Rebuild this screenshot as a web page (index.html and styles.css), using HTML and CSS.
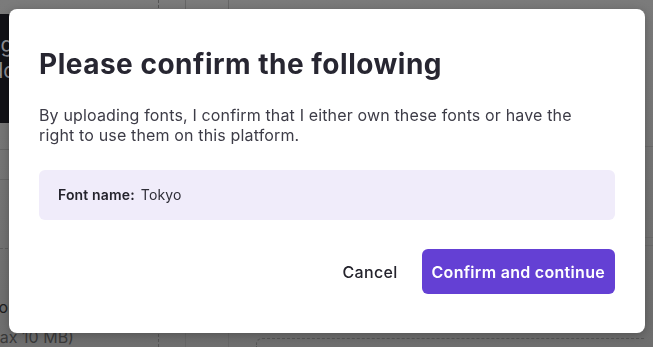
FILE: index.html
```html
<!DOCTYPE html>
<html lang="en">
<head>
<meta charset="utf-8">
<title>Confirm fonts</title>
<link rel="stylesheet" href="styles.css">
</head>
<body>
<div class="page">
  <div class="left-col">
    <div class="dark-card">
      <span class="dark-line">Log</span>
      <span class="dark-line">Add</span>
    </div>
    <div class="row row-a"></div>
    <div class="row row-b"></div>
    <div class="row row-dashed"></div>
    <div class="spacer"></div>
    <div class="upload-title">Upload or</div>
    <div class="upload-note">(max 10 MB)</div>
  </div>
  <div class="mid-col">
    <div class="vline dashed"></div>
    <div class="vline wide"></div>
    <div class="vline last"></div>
    <div class="dropzone"></div>
  </div>
  <div class="right-col">
    <div class="rline r1"></div>
    <div class="rline r2"></div>
    <div class="rline r3"></div>
  </div>
</div>

<div class="overlay">
  <div class="modal" role="dialog" aria-labelledby="modal-title">
    <h1 class="modal-title" id="modal-title">Please confirm the following</h1>
    <p class="modal-text">By uploading fonts, I confirm that I either own these fonts or have the right to use them on this platform.</p>
    <div class="info-box"><strong>Font name:</strong><span class="font-value">Tokyo</span></div>
    <div class="actions">
      <button class="btn-cancel" type="button">Cancel</button>
      <button class="btn-primary" type="button">Confirm and continue</button>
    </div>
  </div>
</div>
</body>
</html>
```

FILE: styles.css
```css
* { box-sizing: border-box; }

html, body {
  margin: 0;
  padding: 0;
  height: 100%;
  overflow: hidden;
}

body {
  font-family: Inter, "Noto Sans", sans-serif;
  background: #7a7a7a;
}

.page {
  display: flex;
  height: 347px;
  overflow: hidden;
  background: linear-gradient(#7b7b7b, #6e6e6e);
}

.left-col {
  flex: 0 0 158px;
  display: flex;
  flex-direction: column;
  overflow: hidden;
}

.dark-card {
  margin-top: 14px;
  height: 110px;
  background: #121217;
  display: flex;
  flex-direction: column;
  padding-top: 20px;
  gap: 4px;
  margin-left: -24px;
}

.dark-line {
  color: #8e8e94;
  font-size: 21px;
  line-height: 22px;
}

.row {
  border-bottom: 1px solid #666;
}
.row-a { height: 28px; }
.row-b { height: 30px; }
.row-dashed { height: 70px; border-bottom: 1px dashed #5e5e5e; }

.spacer { flex: 0 0 48px; }

.upload-title {
  margin-left: -60px;
  font-size: 16px;
  line-height: 20px;
  color: #1e1e1e;
  white-space: nowrap;
}

.upload-note {
  margin-left: -20px;
  margin-top: 10px;
  font-size: 16px;
  line-height: 20px;
  color: #3a3a3a;
  white-space: nowrap;
}

.mid-col {
  display: flex;
  flex: 1 1 auto;
  min-width: 0;
}

.vline {
  flex: 0 0 27px;
  border-left: 1px solid #666;
}
.vline.dashed { border-left: 1px dashed #555; }
.vline.wide { flex-basis: 43px; }
.vline.last { flex-basis: 28px; }

.dropzone {
  align-self: flex-end;
  flex: 1 1 auto;
  height: 9px;
  border: 1px dashed #555;
  border-bottom: none;
  border-right: none;
  border-radius: 6px 0 0 0;
}

.right-col {
  flex: 0 0 8px;
  display: flex;
  flex-direction: column;
}

.rline { border-bottom: 1px solid #6a6a6a; }
.r1 { height: 147px; }
.r2 { height: 91px; }
.r3 { height: 8px; }

.overlay {
  position: fixed;
  inset: 0;
}

.modal {
  position: absolute;
  left: 9px;
  top: 9px;
  width: 636px;
  height: 324px;
  background: #ffffff;
  border-radius: 8px;
  box-shadow: 0 2px 10px rgba(0, 0, 0, 0.25);
  padding: 39px 30px 0 30px;
  display: flex;
  flex-direction: column;
}

.modal-title {
  margin: 0;
  font-size: 28px;
  line-height: 32px;
  font-weight: 700;
  color: #272631;
  letter-spacing: 0.5px;
}

.modal-text {
  margin: 25px 0 0 0;
  padding-right: 12px;
  font-size: 16px;
  line-height: 20px;
  color: #3d3c47;
  letter-spacing: 0.15px;
}

.info-box {
  margin-top: 25px;
  height: 50px;
  background: #f0ecfa;
  border-radius: 6px;
  padding: 15px 19px;
  font-size: 14px;
  line-height: 20px;
  color: #2f2e38;
  letter-spacing: 0.15px;
}

.info-box strong {
  font-weight: 600;
  color: #24232c;
}

.font-value {
  margin-left: 6px;
}

.actions {
  margin-top: 29px;
  display: flex;
  justify-content: flex-end;
  align-items: center;
  gap: 24px;
}

.btn-cancel {
  background: none;
  border: none;
  padding: 0;
  font-family: inherit;
  font-size: 16px;
  font-weight: 500;
  color: #24232c;
  letter-spacing: 0.3px;
  cursor: pointer;
}

.btn-primary {
  height: 45px;
  padding: 0 10px;
  border: none;
  border-radius: 6px;
  background: #6440d4;
  color: #ffffff;
  font-family: inherit;
  font-size: 16px;
  font-weight: 600;
  letter-spacing: 0.3px;
  cursor: pointer;
}
```
